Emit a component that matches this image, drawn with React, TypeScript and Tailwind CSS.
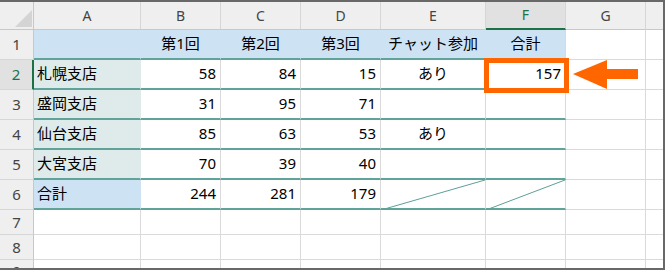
import React from "react";

type Cell = {
  text?: string;
  align?: "left" | "right" | "center";
  fill?: "blue" | "mint";
  diag?: boolean;
  marked?: boolean;
};

const font = { fontFamily: '"Noto Sans", "Noto Sans CJK JP", sans-serif' };

const cols = ["A", "B", "C", "D", "E", "F", "G", ""];

const L = (t: string, fill: Cell["fill"] = "mint"): Cell => ({ text: t, align: "left", fill });
const N = (t: string): Cell => ({ text: t, align: "right" });
const C = (t: string): Cell => ({ text: t, align: "center" });
const H = (t: string): Cell => ({ text: t, align: "center", fill: "blue" });

const table: Cell[][] = [
  [H(""), H("第1回"), H("第2回"), H("第3回"), H("チャット参加"), H("合計")],
  [L("札幌支店"), N("58"), N("84"), N("15"), C("あり"), { ...N("157"), marked: true }],
  [L("盛岡支店"), N("31"), N("95"), N("71"), C(""), C("")],
  [L("仙台支店"), N("85"), N("63"), N("53"), C("あり"), C("")],
  [L("大宮支店"), N("70"), N("39"), N("40"), C(""), C("")],
  [L("合計", "blue"), N("244"), N("281"), N("179"), { diag: true }, { diag: true }],
];

function Diagonal() {
  return (
    <svg
      className="absolute left-0 top-0 w-full h-[calc(100%+2px)]"
      viewBox="0 0 100 100"
      preserveAspectRatio="none"
    >
      <line x1="0" y1="100" x2="100" y2="0" stroke="#5d9f97" strokeWidth="1" vectorEffect="non-scaling-stroke" />
    </svg>
  );
}

function Arrow() {
  return (
    <svg className="absolute left-[7px] top-0 z-20" width="66" height="30" viewBox="0 0 66 30">
      <polygon points="0,14 34,0 34,9 65,9 65,19 34,19 34,29" fill="#ff6600" />
    </svg>
  );
}

function DataCell({ cell, col }: { cell: Cell; col: number }) {
  const fillBg = cell.fill === "blue" ? "bg-[#cde3f4]" : cell.fill === "mint" ? "bg-[#deebea]" : "bg-white";
  const right =
    cell.fill && col < 5 ? (cell.fill === "blue" ? "border-r-[#cde3f4]" : "border-r-[#deebea]") : "border-r-[#dadada]";
  const align =
    cell.align === "right" ? "justify-end pr-[4px]" : cell.align === "left" ? "justify-start pl-[3px]" : "justify-center";
  return (
    <div
      className={`relative flex items-center border-r border-b-2 border-b-[#5fa39b] ${right} ${fillBg} ${align} pb-[1px] text-[15px] text-black`}
    >
      {cell.text}
      {cell.diag && <Diagonal />}
      {cell.marked && (
        <div className="absolute left-[-2px] right-[-4px] top-[-2px] bottom-[-5px] z-10 border-[5px] border-[#ff6600]" />
      )}
    </div>
  );
}

function PlainCell({ last, arrow }: { last?: boolean; arrow?: boolean }) {
  return (
    <div className={`relative bg-white border-b border-[#dadada] ${last ? "" : "border-r"}`}>
      {arrow && <Arrow />}
    </div>
  );
}

export default function App() {
  return (
    <div className="w-[665px] h-[270px] bg-white border-t-2 border-r-2 border-b-2 border-[#686868] overflow-hidden" style={font}>
      <div className="grid h-full grid-cols-[34px_107px_80px_80px_80px_105px_80px_80px_1fr] grid-rows-[28px_30px_30px_30px_30px_30px_30px_25px_25px_1fr]">
        {/* corner */}
        <div className="flex items-end justify-end bg-[#efefef] border-r border-b border-[#c8c8c8] pr-[1px] pb-[2px]">
          <svg width="17" height="17" viewBox="0 0 17 17">
            <polygon points="17,0 17,17 0,17" fill="#d4d4d4" />
          </svg>
        </div>
        {/* column letters */}
        {cols.map((c, i) => {
          const sel = c === "F";
          const last = i === cols.length - 1;
          return (
            <div
              key={`h${i}`}
              className={`flex items-center justify-center text-[14px] pb-[1px] ${
                sel
                  ? "bg-[#e1e1e1] text-[#1e7145] border-b-2 border-b-[#1e7145]"
                  : "bg-[#efefef] text-[#444] border-b border-b-[#c8c8c8]"
              } ${last ? "" : "border-r border-r-[#d6d6d6]"}`}
            >
              {c}
            </div>
          );
        })}
        {/* rows */}
        {Array.from({ length: 9 }, (_, r) => {
          const n = r + 1;
          const sel = n === 2;
          const row = table[r];
          return (
            <React.Fragment key={`r${n}`}>
              <div
                className={`flex items-center justify-center text-[15px] border-b border-b-[#d6d6d6] ${
                  sel
                    ? "bg-[#e1e1e1] text-[#1e7145] border-r-2 border-r-[#1e7145]"
                    : "bg-[#efefef] text-[#444] border-r border-r-[#c8c8c8]"
                }`}
              >
                {n}
              </div>
              {row
                ? row.map((cell, ci) => <DataCell key={ci} cell={cell} col={ci} />)
                : null}
              {row ? (
                <>
                  <PlainCell arrow={n === 2} />
                  <PlainCell last />
                </>
              ) : (
                <>
                  {Array.from({ length: 8 }, (_, ci) => (
                    <PlainCell key={ci} last={ci === 7} />
                  ))}
                </>
              )}
            </React.Fragment>
          );
        })}
      </div>
    </div>
  );
}
